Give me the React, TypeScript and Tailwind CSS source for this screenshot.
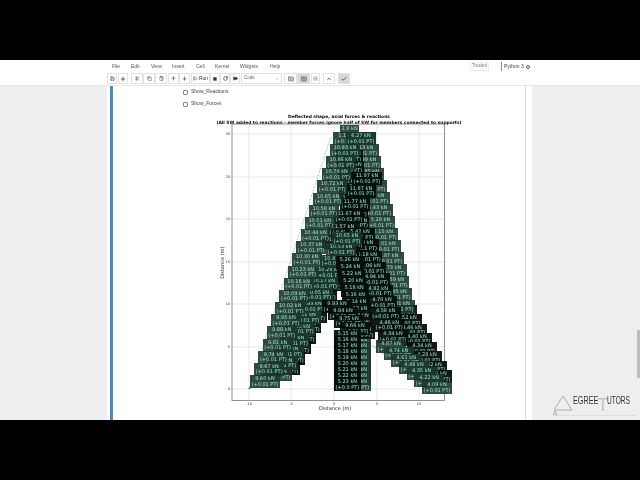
import React from 'react';
import {
  ArrowDown, ArrowUp, ChevronUp, Check, ClipboardPaste, Copy, FastForward, Keyboard, List, Plus, RotateCw, Save, Scissors, Square, StepForward, ChevronDown,
} from 'lucide-react';

const MENU = [
  { name: 'File', w: 'w-[19px]' },
  { name: 'Edit', w: 'w-[20px]' },
  { name: 'View', w: 'w-[21px]' },
  { name: 'Insert', w: 'w-[24px]' },
  { name: 'Cell', w: 'w-[19px]' },
  { name: 'Kernel', w: 'w-[25px]' },
  { name: 'Widgets', w: 'w-[30px]' },
  { name: 'Help', w: 'w-[20px]' },
];

type Lbl = { x: number; y: number; top: string; bottom: string; dark?: boolean };

// walks a member of the truss and drops one label per segment
const strand = (
  x0: number, y0: number, x1: number, y1: number, n: number,
  v0: number, step: number, bottom: string, dark = false,
): Lbl[] =>
  Array.from({ length: n }, (_, i) => {
    const t = n === 1 ? 0 : i / (n - 1);
    return {
      x: x0 + (x1 - x0) * t,
      y: y0 + (y1 - y0) * t,
      top: `${(v0 + step * i).toFixed(2)} kN`,
      bottom,
      dark,
    };
  });

const LABELS: Lbl[] = [
  // centre column, grey one sits behind the dark one
  ...strand(344, 336, 344, 378, 8, 5.02, 0.01, '(+0.0 PT)'),
  ...strand(387, 305, 422, 370, 8, 4.58, -0.06, '(+0.01 PT)', true),
  ...strand(346, 132, 385, 300, 15, 6.27, -0.14, '(+0.01 PT)'),
  ...strand(336, 150, 346, 250, 10, 11.87, -0.1, '(+0.0 PT)', true),
  ...strand(322, 236, 352, 172, 6, 11.47, 0.1, '(+0.01 PT)', true),
  ...strand(345, 228, 378, 330, 10, 5.42, -0.12, '(+0.01 PT)', true),
  ...strand(376, 340, 422, 381, 7, 4.87, -0.13, '(+0.01 PT)'),
  ...strand(270, 362, 334, 236, 13, 9.3, 0.12, '(+0.01 PT)', true),
  ...strand(262, 368, 332, 232, 13, 9.21, 0.12, '(+0.01 PT)'),
  ...strand(250, 375, 330, 144, 20, 9.6, 0.07, '(+0.01 PT)'),
  ...strand(336, 256, 348, 326, 11, 5.26, -0.02, '(+0.0 PT)', true),
  ...strand(322, 300, 340, 322, 4, 9.93, -0.09, '(+0.01 PT)', true),
  ...strand(334, 330, 334, 378, 9, 5.15, 0.01, '(+0.0 PT)', true),
  { x: 333, y: 132, top: '1.14 kN', bottom: '(+0.01 PT)' },
  { x: 346, y: 132, top: '6.27 kN', bottom: '(+0.01 PT)' },
  { x: 340, y: 125, top: '2.8 kN', bottom: '' },
];

const X_TICKS = [{ x: 249, t: '-10' }, { x: 291, t: '-5' }, { x: 334, t: '0' }, { x: 377, t: '5' }, { x: 419, t: '10' }];
const Y_TICKS = [{ y: 389, t: '0' }, { y: 347, t: '5' }, { y: 304, t: '10' }, { y: 262, t: '15' }, { y: 219, t: '20' }, { y: 177, t: '25' }, { y: 134, t: '30' }];

const ToolBtn = ({ children, active, w = 'w-[10px]' }: { children: React.ReactNode; active?: boolean; w?: string }) => (
  <div className={`flex h-[11px] ${w} items-center justify-center border border-[#e2e2e2] ${active ? 'bg-[#d8d8d8]' : 'bg-white'} text-[#333]`}>
    {children}
  </div>
);

// plot is a free canvas, coordinates below are page pixels minus the origin of the figure
const OX = 190;
const OY = 110;

const Figure = () => (
  <div className="relative h-[310px] w-[290px] font-['DejaVu_Sans',sans-serif] text-black">
    <div className="absolute left-[0px] top-[4px] w-[298px] text-center text-[4.4px] font-bold leading-[5.5px]">
      <div>Deflected shape, axial forces &amp; reactions</div>
      <div>(All SW added to reactions - member forces ignore half of SW for members connected to supports)</div>
    </div>

    <svg className="absolute left-0 top-0" width="290" height="310" viewBox={`${OX} ${OY} 290 310`}>
      {X_TICKS.map((t) => (
        <line key={t.x} x1={t.x} x2={t.x} y1={125} y2={402} stroke="#dcdcdc" strokeWidth="0.7" />
      ))}
      {Y_TICKS.map((t) => (
        <line key={t.y} x1={230} x2={445} y1={t.y} y2={t.y} stroke="#dcdcdc" strokeWidth="0.7" />
      ))}
      <rect x="232" y="124" width="212.5" height="276.5" fill="none" stroke="#777" strokeWidth="0.8" />
      <path d="M249 389 L331 136" stroke="#7cc9b8" strokeWidth="0.8" strokeDasharray="2 1.2" fill="none" />
      <path d="M372 345 L428 389" stroke="#9aa" strokeWidth="0.8" fill="none" />
      <path d="M249 389 l2 -3 M334 389 l2 -3" stroke="#5560b0" strokeWidth="1.4" />
    </svg>

    {LABELS.map((l, i) => (
      <div
        key={i}
        className={`absolute whitespace-nowrap px-[1.5px] py-[1px] text-[5px] leading-[5.5px] text-[#8fe3c6] ${l.dark ? 'bg-[#050d0b]/95' : 'bg-[#1c352f]/90'}`}
        style={{ left: l.x - OX, top: l.y - OY }}
      >
        <div className="text-center">{l.top}</div>
        {l.bottom && <div>{l.bottom}</div>}
      </div>
    ))}

    {X_TICKS.map((t) => (
      <span key={t.t} className="absolute top-[292px] w-[16px] text-center text-[3.5px] text-[#333]" style={{ left: t.x - OX - 8 }}>
        {t.t}
      </span>
    ))}
    {Y_TICKS.map((t) => (
      <span key={t.t} className="absolute left-[34px] w-[6px] text-right text-[3.5px] leading-[4px] text-[#333]" style={{ top: t.y - OY - 2 }}>
        {t.t}
      </span>
    ))}
    <div className="absolute left-[129px] top-[295px] text-[5px] text-[#222]">Distance (m)</div>
    <div className="absolute left-[17px] top-[149px] origin-center -rotate-90 text-[5px] text-[#222]">Distance (m)</div>
  </div>
);

const Logo = () => (
  <div className="absolute left-[553px] top-[309px] flex h-[21px] w-[83px] items-end border-b border-[#ddd] font-['Liberation_Sans',sans-serif] text-[#333]">
    <svg width="20" height="20" viewBox="0 0 20 20" className="shrink-0">
      <path d="M1 15 L10 1 L19 15 Z" fill="none" stroke="#999" strokeWidth="0.8" />
      <path d="M0 20 l2 -4 l2 4 Z" fill="none" stroke="#888" strokeWidth="0.6" />
    </svg>
    <div className="mb-[4px] w-[24px] whitespace-nowrap">
      <span className="inline-block origin-left scale-x-[0.66] text-[11px] leading-[9px]">EGREE</span>
    </div>
    <span className="mb-[3px] w-[10px] text-[19px] leading-[15px] text-[#c4c4c4]">T</span>
    <div className="mb-[4px] w-[26px] whitespace-nowrap">
      <span className="inline-block origin-left scale-x-[0.6] text-[11px] leading-[9px]">UTORS</span>
    </div>
  </div>
);

export default function App() {
  return (
    <div className="relative flex h-[480px] w-[640px] flex-col overflow-hidden bg-black font-['Liberation_Sans',sans-serif] blur-[0.35px]">
      <div className="h-[60px] shrink-0 bg-black" />

      {/* menu bar */}
      <div className="flex h-[12px] shrink-0 items-center bg-white pl-[112px] pt-[1px] text-[5px] text-[#555]">
        {MENU.map((m) => (
          <span key={m.name} className={m.w}>{m.name}</span>
        ))}
        <div className="ml-[180px] flex h-[9px] w-[19px] items-center justify-center border border-[#eeeeee] text-[4.5px] text-[#777]">Trusted</div>
        <div className="ml-[12px] h-[9px] border-l border-[#888]" />
        <span className="ml-[2px] text-[5px] text-[#444]">Python 3</span>
        <div className="ml-[2px] h-[4px] w-[4px] rounded-full border border-[#555]" />
      </div>

      {/* toolbar */}
      <div className="flex h-[14px] shrink-0 items-start gap-[1px] border-b border-[#e5e5e5] bg-white pl-[107px] pt-[1px]">
        <ToolBtn><Save size={5} /></ToolBtn>
        <ToolBtn><Plus size={6} strokeWidth={3} /></ToolBtn>
        <div className="ml-[2px] flex">
          <ToolBtn w="w-[12px]"><Scissors size={5} /></ToolBtn>
          <ToolBtn w="w-[12px]"><Copy size={5} /></ToolBtn>
          <ToolBtn w="w-[12px]"><ClipboardPaste size={5} /></ToolBtn>
        </div>
        <div className="flex">
          <ToolBtn w="w-[11px]"><ArrowUp size={5} strokeWidth={3} /></ToolBtn>
          <ToolBtn w="w-[11px]"><ArrowDown size={5} strokeWidth={3} /></ToolBtn>
        </div>
        <div className="flex">
          <ToolBtn w="w-[19px]"><StepForward size={5} /><span className="ml-[1px] text-[5px]">Run</span></ToolBtn>
          <ToolBtn w="w-[10px]"><Square size={4} fill="currentColor" /></ToolBtn>
          <ToolBtn w="w-[10px]"><RotateCw size={5} strokeWidth={3} /></ToolBtn>
          <ToolBtn w="w-[10px]"><FastForward size={5} fill="currentColor" /></ToolBtn>
        </div>
        <div className="flex h-[11px] w-[41px] items-center justify-between border border-[#e2e2e2] px-[2px] text-[4.5px] text-[#666]">
          Code
          <ChevronDown size={4} />
        </div>
        <div className="ml-[1px] flex">
          <ToolBtn w="w-[13px]"><Keyboard size={6} /></ToolBtn>
          <ToolBtn w="w-[13px]" active><Keyboard size={6} /></ToolBtn>
        </div>
        <ToolBtn w="w-[9px]"><List size={5} /></ToolBtn>
        <div className="ml-[2px] flex gap-[3px]">
          <ToolBtn w="w-[12px]"><ChevronUp size={6} strokeWidth={3} /></ToolBtn>
          <ToolBtn w="w-[12px]" active><Check size={6} strokeWidth={3} /></ToolBtn>
        </div>
      </div>

      {/* notebook */}
      <div className="relative flex h-[334px] shrink-0 bg-[#eeeeee]">
        <div className="ml-[107px] flex w-[425px] bg-white">
          <div className="ml-[3px] h-full w-[3px] bg-[#3f8fc4]" />
          <div className="flex w-[413px] flex-col border-r border-[#ddd]">
            <div className="ml-[70px] flex flex-col gap-[6px] pt-[3px] text-[5px] text-[#444]">
              <label className="flex h-[6px] items-center gap-[3px]">
                <span className="h-[5px] w-[5px] rounded-[1px] border border-[#888]" />
                Show_Reactions
              </label>
              <label className="flex h-[6px] items-center gap-[3px]">
                <span className="h-[5px] w-[5px] rounded-[1px] border border-[#888]" />
                Show_Forces
              </label>
            </div>
            <div className="ml-[77px] mt-[3px]">
              <Figure />
            </div>
          </div>
        </div>
        <div className="absolute right-0 top-[244px] h-[48px] w-[3px] bg-[#bdbdbd]" />
        <Logo />
      </div>

      <div className="flex-1 bg-black" />
    </div>
  );
}
